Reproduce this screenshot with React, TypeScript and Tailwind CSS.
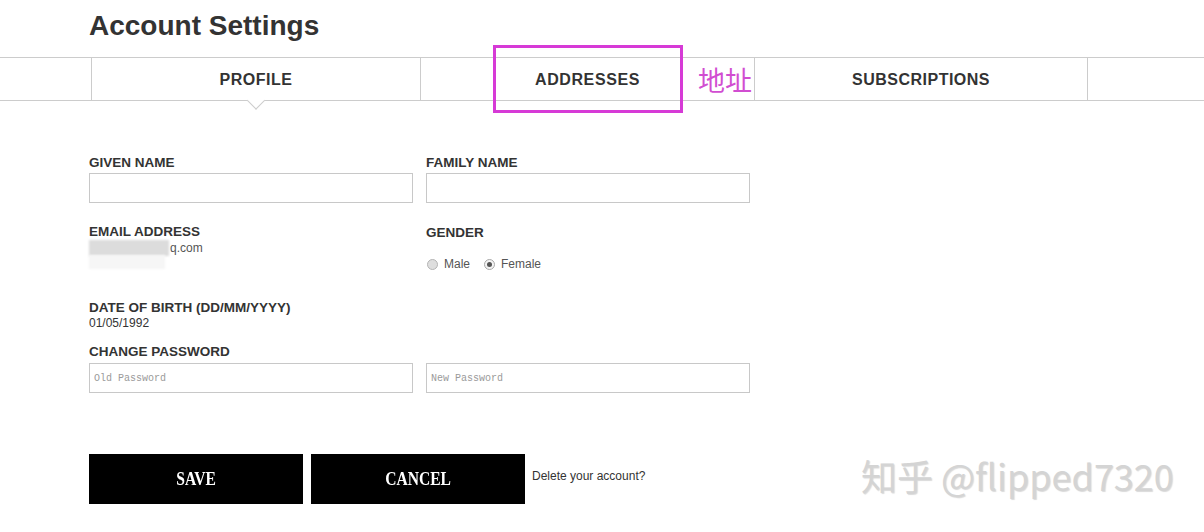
const Label = ({ children }: { children: React.ReactNode }) => (
  <div className="h-[16px] text-[13.5px] leading-[16px] font-bold text-[#333]">{children}</div>
);

const Field = ({ placeholder }: { placeholder?: string }) => (
  <input
    type="text"
    placeholder={placeholder}
    className="block h-[30px] w-[324px] border border-[#c8c8c8] bg-white px-[4px] font-['Liberation_Mono',monospace] text-[10px] text-[#333] outline-none placeholder:text-[#9a9a9a]"
  />
);

const Radio = ({ label, checked }: { label: string; checked?: boolean }) => (
  <label className="flex items-center">
    <span
      className={
        checked
          ? "flex h-[11px] w-[11px] items-center justify-center rounded-full border border-[#a8a8a8] bg-[#f4f4f4]"
          : "flex h-[11px] w-[11px] items-center justify-center rounded-full border border-[#b4b4b4] bg-[#dedede]"
      }
    >
      {checked && <span className="h-[5px] w-[5px] rounded-full bg-[#555]" />}
    </span>
    <span className="ml-[6px] text-[12px] leading-[14px] text-[#555]">{label}</span>
  </label>
);

export default function App() {
  return (
    <div className="relative h-[532px] w-[1204px] overflow-hidden bg-white font-['Liberation_Sans',Arial,sans-serif] text-[#333]">
      <h1 className="pl-[89px] pt-[10px] text-[28px] leading-[32px] font-bold text-[#333]">Account Settings</h1>

      {/* Tabs */}
      <nav className="mt-[15px] flex h-[44px] border-y border-[#cccccc] pl-[91px]">
        <div className="relative flex w-[329px] items-center justify-center border-l border-[#cccccc] pt-[1px] text-[16px] font-bold tracking-[0.5px] text-[#333]">
          PROFILE
          <span className="absolute bottom-[-7px] left-1/2 h-[13px] w-[13px] -translate-x-1/2 rotate-45 border-r border-b border-[#cccccc] bg-white" />
        </div>
        <div className="flex w-[334px] items-center justify-center border-l border-[#cccccc] pt-[1px] text-[16px] font-bold tracking-[0.6px] text-[#333]">
          ADDRESSES
        </div>
        <div className="flex w-[334px] items-center justify-center border-x border-[#cccccc] pt-[1px] text-[16px] font-bold tracking-[0.5px] text-[#333]">
          SUBSCRIPTIONS
        </div>
      </nav>

      {/* Form */}
      <form className="flex flex-col pl-[89px] pt-[54px]">
        <div className="grid grid-cols-[324px_324px] gap-x-[13px]">
          <div>
            <Label>GIVEN NAME</Label>
            <div className="mt-[2px]">
              <Field />
            </div>
          </div>
          <div>
            <Label>FAMILY NAME</Label>
            <div className="mt-[2px]">
              <Field />
            </div>
          </div>
        </div>

        <div className="mt-[21px] grid grid-cols-[324px_324px] gap-x-[13px]">
          <div>
            <Label>EMAIL ADDRESS</Label>
            <div className="mt-[1px] flex h-[14px] items-center text-[12px] leading-[14px] text-[#555]">
              <span className="mr-[1px] inline-block h-[16px] w-[80px] bg-[#dcdcdc] blur-[1px]" />
              q.com
            </div>
            <div className="h-[14px] w-[76px] bg-[#f6f6f6] blur-[1px]" />
          </div>
          <div>
            <div className="pt-[1px]">
              <Label>GENDER</Label>
            </div>
            <div className="ml-[1px] mt-[15px] flex h-[16px] items-center gap-[14px]">
              <Radio label="Male" />
              <Radio label="Female" checked />
            </div>
          </div>
        </div>

        <div className="mt-[28px]">
          <Label>DATE OF BIRTH (DD/MM/YYYY)</Label>
          <div className="text-[12px] leading-[14px] text-[#333]">01/05/1992</div>
        </div>

        <div className="mt-[14px]">
          <Label>CHANGE PASSWORD</Label>
          <div className="mt-[3px] grid grid-cols-[324px_324px] gap-x-[13px]">
            <Field placeholder="Old Password" />
            <Field placeholder="New Password" />
          </div>
        </div>

        <div className="mt-[61px] flex items-center">
          <button
            type="button"
            className="flex h-[50px] w-[214px] items-center justify-center bg-black font-['Liberation_Serif',serif] text-[19px] font-bold text-white"
          >
            <span className="inline-block scale-x-[0.82]">SAVE</span>
          </button>
          <button
            type="button"
            className="ml-[8px] flex h-[50px] w-[214px] items-center justify-center bg-black font-['Liberation_Serif',serif] text-[19px] font-bold text-white"
          >
            <span className="inline-block scale-x-[0.82]">CANCEL</span>
          </button>
          <span className="mb-[6px] ml-[7px] text-[12px] leading-[14px] text-[#333]">Delete your account?</span>
        </div>
      </form>

      {/* Annotation */}
      <div className="absolute left-[493px] top-[45px] h-[68px] w-[190px] border-[3px] border-[#d63ad6]" />
      <div className="absolute left-[698px] top-[63px] whitespace-nowrap font-['Noto_Sans_CJK_SC',sans-serif] text-[27px] leading-[34px] text-[#d14dd1]">
        地址
      </div>

      {/* Watermark */}
      <div className="absolute left-[861px] top-[454px] whitespace-nowrap font-['Noto_Sans_CJK_SC',sans-serif] text-[36px] leading-[42px] text-[#d4d4d4] [text-shadow:1px_1px_1px_rgba(0,0,0,0.15)]">
        知乎 @flipped7320
      </div>
    </div>
  );
}
